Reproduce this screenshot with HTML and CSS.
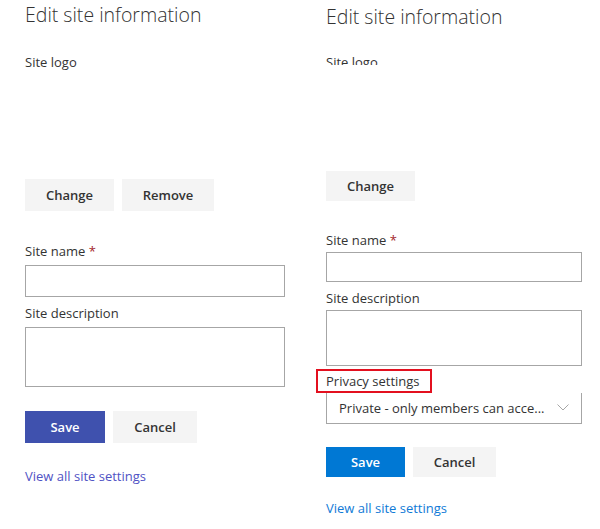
FILE: index.html
```html
<!DOCTYPE html>
<html>
<head>
<meta charset="utf-8">
<link rel="stylesheet" href="styles.css">
</head>
<body>
<div class="page">
  <section class="panel panel-a">
    <h1 class="title">Edit site information</h1>
    <div class="label logo-label">Site logo</div>
    <div class="logo-area"></div>
    <div class="btn-row">
      <button class="btn w-change">Change</button>
      <button class="btn w-remove">Remove</button>
    </div>
    <div class="label name-label">Site name <span class="req">*</span></div>
    <div class="input"></div>
    <div class="label desc-label">Site description</div>
    <div class="textarea"></div>
    <div class="btn-row actions">
      <button class="btn primary w-save">Save</button>
      <button class="btn w-cancel">Cancel</button>
    </div>
    <a class="link">View all site settings</a>
  </section>
  <section class="panel panel-b">
    <h1 class="title">Edit site information</h1>
    <div class="clip"><div class="label">Site logo</div></div>
    <div class="logo-area"></div>
    <div class="btn-row">
      <button class="btn w-change">Change</button>
    </div>
    <div class="label name-label">Site name <span class="req">*</span></div>
    <div class="input"></div>
    <div class="label desc-label">Site description</div>
    <div class="textarea"></div>
    <div class="label privacy-label"><span class="highlight">Privacy settings</span></div>
    <div class="dropdown">
      <span class="dd-text">Private - only members can acce...</span>
      <svg class="chev" width="12" height="7" viewBox="0 0 12 7"><path d="M0.5 0.5 L6 6 L11.5 0.5" fill="none" stroke="#a6a6a6" stroke-width="1"/></svg>
    </div>
    <div class="btn-row actions">
      <button class="btn primary w-save">Save</button>
      <button class="btn w-cancel">Cancel</button>
    </div>
    <a class="link">View all site settings</a>
  </section>
</div>
</body>
</html>
```

FILE: styles.css
```css
* { box-sizing: border-box; }
html, body { margin: 0; padding: 0; background: #fff; }
body {
  font-family: "Open Sans", "Noto Sans", sans-serif;
  color: #333;
  width: 600px;
  height: 529px;
  overflow: hidden;
}
.page { display: flex; }
.panel { width: 300px; display: flex; flex-direction: column; }
.panel-a { padding-left: 25px; padding-right: 15px; }
.panel-b { padding-left: 26px; padding-right: 18px; }

.title {
  margin: 0;
  font-size: 19.5px;
  font-weight: 300;
  line-height: 30px;
  height: 30px;
  color: #333;
}
.panel-b .title { margin-top: 2px; }

.label {
  font-size: 13px;
  line-height: 20px;
  height: 20px;
  color: #333;
  white-space: nowrap;
}
.logo-label { margin-top: 22px; }
.panel-a .logo-area { height: 107px; }

.clip { margin-top: 20px; height: 13px; overflow: hidden; }
.panel-b .logo-area { height: 106px; }

.btn-row { display: flex; gap: 8px; }
.btn {
  font-family: inherit;
  font-size: 13px;
  font-weight: 600;
  color: #333;
  background: #f4f4f4;
  border: none;
  height: 32px;
  padding: 0;
  margin: 0;
}
.panel-b .btn { height: 30px; }
.w-change { width: 89px; }
.w-remove { width: 92px; }
.w-save { width: 80px; }
.w-cancel { width: 84px; }
.panel-b .w-save { width: 79px; }
.panel-b .w-cancel { width: 83px; }
.btn.primary { background: #3f51ae; color: #fff; }
.panel-b .btn.primary { background: #0078d4; }

.req { color: #a4262c; }

.panel-a .name-label { margin-top: 30px; }
.panel-b .name-label { margin-top: 29px; }

.input { border: 1px solid #a6a6a6; background: #fff; }
.panel-a .input { height: 32px; margin-top: 4px; }
.panel-b .input { height: 30px; margin-top: 2px; }

.desc-label { margin-top: 6px; }

.textarea { border: 1px solid #a6a6a6; background: #fff; }
.panel-a .textarea { height: 60px; margin-top: 4px; }
.panel-b .textarea { height: 56px; margin-top: 2px; }

.privacy-label { margin-top: 5px; position: relative; }
.highlight { position: relative; }
.highlight::after {
  content: "";
  position: absolute;
  left: -10px;
  right: -12px;
  top: -3px;
  bottom: -3px;
  border: 2px solid #e3101f;
  z-index: 2;
}

.dropdown {
  margin-top: 2px;
  height: 31px;
  border: 1px solid #a6a6a6;
  border-top: none;
  display: flex;
  align-items: center;
  padding: 0 12px 0 12px;
  justify-content: space-between;
}
.dd-text { font-size: 13px; color: #333; white-space: nowrap; }
.chev { margin-top: -2px; }

.panel-a .actions { margin-top: 24px; }
.panel-b .actions { margin-top: 23px; }

.link {
  font-size: 13px;
  line-height: 20px;
  height: 20px;
  cursor: pointer;
}
.panel-a .link { margin-top: 23px; color: #4f52c4; }
.panel-b .link { margin-top: 21px; color: #0f7ad6; }
```
